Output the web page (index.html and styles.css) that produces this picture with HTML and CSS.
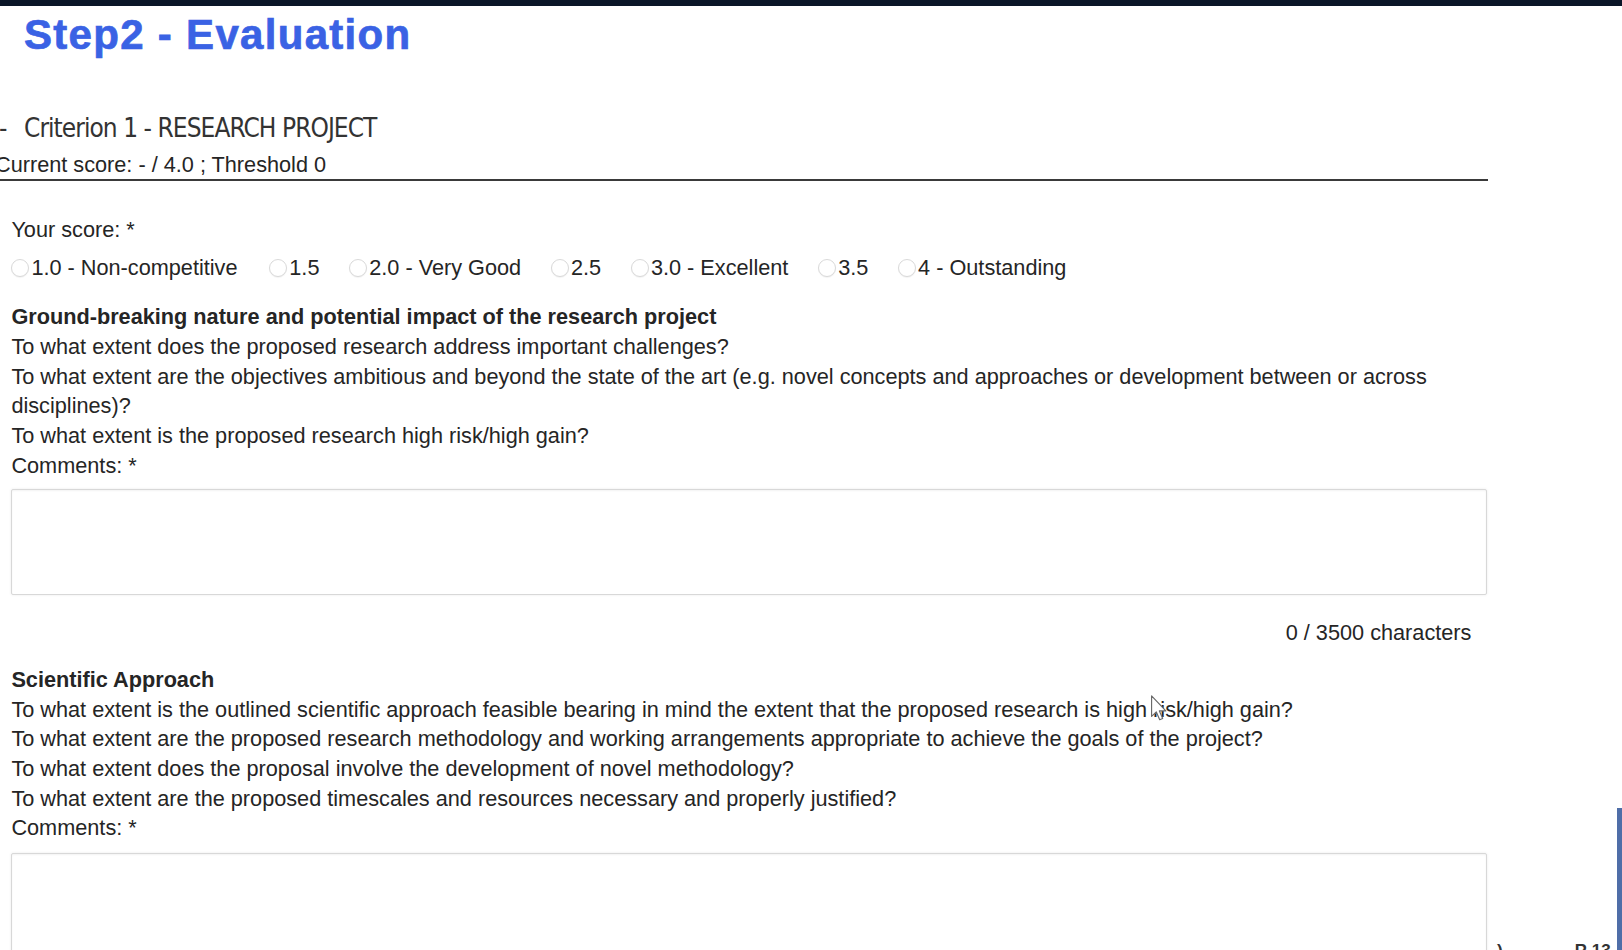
FILE: index.html
```html
<!DOCTYPE html>
<html lang="en">
<head>
<meta charset="utf-8">
<title>Step2 - Evaluation</title>
<link rel="stylesheet" href="styles.css">
</head>
<body>
<div class="topbar"></div>
<h1 class="page-title">Step2 - Evaluation</h1>

<section class="criterion">
  <div class="crit-head">
    <h2 class="crit-title"><span class="toggle">-</span><span>Criterion 1 - RESEARCH PROJECT</span></h2>
    <div class="crit-score">Current score: - / 4.0 ; Threshold 0</div>
  </div>

  <div class="crit-body">
    <div class="field-label">Your score: *</div>
    <div class="radio-row">
      <label class="radio-item"><input type="radio" name="score"><span>1.0 - Non-competitive</span></label>
      <label class="radio-item"><input type="radio" name="score"><span>1.5</span></label>
      <label class="radio-item"><input type="radio" name="score"><span>2.0 - Very Good</span></label>
      <label class="radio-item"><input type="radio" name="score"><span>2.5</span></label>
      <label class="radio-item"><input type="radio" name="score"><span>3.0 - Excellent</span></label>
      <label class="radio-item"><input type="radio" name="score"><span>3.5</span></label>
      <label class="radio-item"><input type="radio" name="score"><span>4 - Outstanding</span></label>
    </div>

    <div class="sub sub-first">
      <div class="sub-title">Ground-breaking nature and potential impact of the research project</div>
      <div>To what extent does the proposed research address important challenges?</div>
      <div>To what extent are the objectives ambitious and beyond the state of the art (e.g. novel concepts and approaches or development between or across disciplines)?</div>
      <div>To what extent is the proposed research high risk/high gain?</div>
      <div>Comments: *</div>
      <textarea class="comments"></textarea>
      <div class="counter">0 / 3500 characters</div>
    </div>

    <div class="sub sub-second">
      <div class="sub-title">Scientific Approach</div>
      <div>To what extent is the outlined scientific approach feasible bearing in mind the extent that the proposed research is high risk/high gain?</div>
      <div>To what extent are the proposed research methodology and working arrangements appropriate to achieve the goals of the project?</div>
      <div>To what extent does the proposal involve the development of novel methodology?</div>
      <div>To what extent are the proposed timescales and resources necessary and properly justified?</div>
      <div>Comments: *</div>
      <textarea class="comments"></textarea>
    </div>
  </div>
</section>

<div class="side-bar"></div>
<div class="float-widget"><span class="fw-paren">)</span><span class="fw-text">R 13</span></div>

<svg class="cursor" width="19" height="30" viewBox="0 0 18 28" aria-hidden="true">
  <path d="M1.5 1.5 L1.5 21 L6 16.8 L9.2 24.2 L12 23 L8.9 15.8 L15 15.8 Z" fill="#ffffff" stroke="#6a6a6a" stroke-width="1.1" stroke-linejoin="round"/>
</svg>
</body>
</html>
```

FILE: styles.css
```css
html, body {
  margin: 0;
  height: 950px;
  overflow: hidden;
  background: #ffffff;
}

body {
  position: relative;
  font-family: "Liberation Sans", Arial, Helvetica, sans-serif;
  font-size: 21.7px;
  line-height: 29.7px;
  color: #252525;
}

.topbar {
  height: 6px;
  background: #0b1628;
}

.page-title {
  margin: 4.5px 0 0 24px;
  font-size: 42px;
  line-height: 48px;
  font-weight: bold;
  letter-spacing: 1.3px;
  color: #3a62e4;
  -webkit-text-stroke: 0.7px #3a62e4;
}

.crit-head {
  width: 1488px;
  padding-bottom: 1px;
  border-bottom: 2px solid #3a3a3a;
}

.crit-title {
  display: flex;
  margin: 56px 0 0 0;
  font-family: "DejaVu Sans Condensed", "DejaVu Sans", sans-serif;
  font-stretch: condensed;
  font-size: 26px;
  line-height: 26px;
  font-weight: normal;
  letter-spacing: -0.95px;
  color: #333333;
}

.toggle {
  width: 25px;
  margin-left: -1px;
}

.crit-score {
  margin: 11.3px 0 0 -5px;
  line-height: 26px;
}

.crit-body {
  width: 1476px;
  padding-left: 11.4px;
}

.field-label {
  margin-top: 34.5px;
}

.radio-row {
  display: flex;
  align-items: center;
  gap: 29.8px;
  margin-top: 7.8px;
}

.radio-item {
  display: flex;
  align-items: center;
}

.radio-item:first-child {
  margin-right: 2px;
}

.radio-item input {
  -webkit-appearance: none;
  appearance: none;
  box-sizing: border-box;
  width: 18px;
  height: 18px;
  margin: 0 2px 0 0;
  border: 1px solid #d9d9d9;
  border-radius: 50%;
  background: #ffffff;
  box-shadow: 0 1px 1px rgba(0, 0, 0, 0.05);
}

.sub-first {
  margin-top: 19.8px;
}

.sub-second {
  margin-top: 16.8px;
}

.sub-title {
  font-weight: bold;
}

.comments {
  display: block;
  box-sizing: border-box;
  width: 100%;
  height: 106px;
  margin-top: 8.3px;
  border: 1px solid #d8d8d8;
  border-radius: 2px;
  box-shadow: inset 0 1px 2px rgba(0, 0, 0, 0.05), 0 0 3px rgba(0, 0, 0, 0.08);
  resize: none;
  font: inherit;
  background: #ffffff;
}

.sub-second .comments {
  margin-top: 10.3px;
}

.counter {
  margin-top: 23.5px;
  padding-right: 16px;
  text-align: right;
}

.side-bar {
  position: absolute;
  right: 0;
  top: 808px;
  width: 5px;
  height: 142px;
  background: #4f6ea8;
}

.float-widget {
  position: absolute;
  left: 1497px;
  top: 941px;
  display: flex;
  gap: 72px;
  font-size: 17px;
  font-weight: bold;
  line-height: 20px;
  color: #333333;
}

.cursor {
  position: absolute;
  left: 1150px;
  top: 694px;
}
```
